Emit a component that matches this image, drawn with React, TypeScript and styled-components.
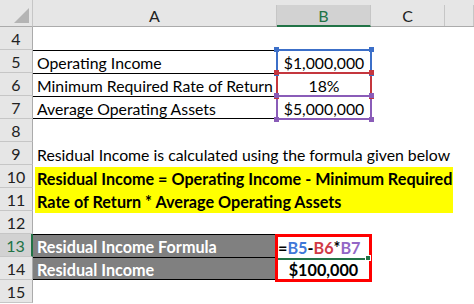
import styled, { createGlobalStyle } from "styled-components"

const GlobalStyle = createGlobalStyle`
    html, body {
        margin: 0;
        padding: 0;
        background: #ffffff;
    }
    body {
        font-family: Lato, "Liberation Sans", sans-serif;
        color: #000000;
    }
`

const Sheet = styled.div`
    display: grid;
    grid-template-columns: 33px 244px 94px 74px 29px;
    grid-template-rows: 27px repeat(12, 23px);
    width: 474px;
    height: 304px;
    overflow: hidden;
    position: relative;
    background: #ffffff;
`

const Corner = styled.div`
    grid-row: 1;
    grid-column: 1;
    background: #e6e6e6;
    border-bottom: 1px solid #ababab;
    border-right: 1px solid #c6c6c6;
    box-sizing: border-box;
    display: flex;
    align-items: flex-end;
    justify-content: flex-end;
    padding: 0 2px 2px 0;
`

const ColHead = styled.div<{ $col: number }>`
    grid-row: 1;
    grid-column: ${(p) => p.$col};
    background: #e6e6e6;
    border-bottom: 1px solid #ababab;
    box-sizing: border-box;
    padding-top: 5px;
    display: flex;
`

const ColLabel = styled.div<{ $active?: boolean }>`
    flex: 1;
    display: flex;
    align-items: center;
    justify-content: center;
    font-size: 16px;
    color: ${(p) => (p.$active ? "#217346" : "#222222")};
    background: ${(p) => (p.$active ? "#d2d2d2" : "transparent")};
    border-right: 1px solid #c6c6c6;
    border-bottom: ${(p) => (p.$active ? "2px solid #217346" : "0")};
    margin-bottom: ${(p) => (p.$active ? "-1px" : "0")};
`

const RowHead = styled.div<{ $row: number; $active?: boolean }>`
    grid-row: ${(p) => p.$row};
    grid-column: 1;
    background: ${(p) => (p.$active ? "#d2d2d2" : "#e6e6e6")};
    color: ${(p) => (p.$active ? "#217346" : "#222222")};
    border-bottom: 1px solid #c6c6c6;
    border-right: ${(p) => (p.$active ? "2px solid #217346" : "1px solid #ababab")};
    box-sizing: border-box;
    display: flex;
    align-items: center;
    justify-content: center;
    font-size: 16px;
`

const Cell = styled.div<{ $row: number; $col: number; $span?: number; $top?: boolean; $bottom?: boolean }>`
    grid-row: ${(p) => p.$row};
    grid-column: ${(p) => p.$col} / span ${(p) => p.$span ?? 1};
    box-sizing: border-box;
    border-top: ${(p) => (p.$top ? "1px solid #000000" : "0")};
    border-bottom: ${(p) => (p.$bottom ? "1px solid #000000" : "0")};
    display: flex;
    align-items: center;
    padding: 1px 4px 0;
    font-size: 15.8px;
    white-space: nowrap;
    position: relative;
`

const ValueCell = styled(Cell)`
    justify-content: center;
    padding: 1px 0 0;
`

const Handle = styled.span<{ $color: string; $x: "left" | "right"; $y: "top" | "bottom" }>`
    position: absolute;
    width: 5px;
    height: 5px;
    background: ${(p) => p.$color};
    ${(p) => p.$x}: -3px;
    ${(p) => p.$y}: -3px;
    z-index: 3;
`

const RangeFrame = styled.span<{ $color: string }>`
    position: absolute;
    inset: -1px;
    border: 2px solid ${(p) => p.$color};
    pointer-events: none;
    z-index: 2;
`

const Highlight = styled.div`
    grid-row: 8 / span 2;
    grid-column: 2 / span 4;
    margin: 2px 0 -2px 2px;
    width: 418px;
    background: #ffff00;
    font-size: 16.2px;
    font-weight: 700;
    display: flex;
    flex-direction: column;
    justify-content: space-around;
    padding: 0 0 0 2px;
    box-sizing: border-box;
`

const GrayCell = styled(Cell)`
    background: #808080;
    color: #ffffff;
    font-weight: 700;
    font-size: 16.2px;
    border-top: 1px solid #000000;
`

const ResultBox = styled.div`
    grid-row: 11 / span 2;
    grid-column: 3;
    margin: 0 -1px -2px -2px;
    border: 3px solid #ff0000;
    display: flex;
    flex-direction: column;
    z-index: 2;
    box-sizing: border-box;
    background: #ffffff;
`

const FormulaCell = styled.div`
    flex: 1;
    font-size: 16.2px;
    font-weight: 700;
    display: flex;
    align-items: center;
    padding-top: 1px;
    border-bottom: 2px solid #217346;
    position: relative;
`

const FillHandle = styled.span`
    position: absolute;
    right: -2px;
    bottom: -3px;
    width: 4px;
    height: 4px;
    background: #217346;
    border: 1px solid #ffffff;
`

const ResultCell = styled.div`
    flex: 1;
    font-size: 16.2px;
    font-weight: 700;
    display: flex;
    align-items: center;
    justify-content: center;
`

const Ref = styled.span<{ $color: string }>`
    color: ${(p) => p.$color};
`

const Line = styled.span``

const BLUE = "#3c6fc8"
const RED = "#c4363e"
const PURPLE = "#8a5cb8"

const inputs = [
    { row: 5, label: "Operating Income", value: "$1,000,000", color: BLUE, ink: "#3f78d8" },
    { row: 6, label: "Minimum Required Rate of Return", value: "18%", color: RED, ink: "#d03a46" },
    { row: 7, label: "Average Operating Assets", value: "$5,000,000", color: PURPLE, ink: "#9266c6" },
]

export default function App() {
    const rows = [4, 5, 6, 7, 8, 9, 10, 11, 12, 13, 14, 15]

    return (
        <>
            <GlobalStyle />
            <Sheet>
                <Corner>
                    <svg width="16" height="16" viewBox="0 0 16 16">
                        <polygon points="0,15 15,15 15,0" fill="#b4b4b4" />
                    </svg>
                </Corner>
                <ColHead $col={2}><ColLabel>A</ColLabel></ColHead>
                <ColHead $col={3}><ColLabel $active>B</ColLabel></ColHead>
                <ColHead $col={4}><ColLabel>C</ColLabel></ColHead>
                <ColHead $col={5}><ColLabel /></ColHead>

                {rows.map((r) => (
                    <RowHead key={r} $row={r - 2} $active={r === 13}>{r}</RowHead>
                ))}

                {inputs.map((item, i) => (
                    <Cell key={item.row} $row={item.row - 2} $col={2} $top $bottom={i === inputs.length - 1}>
                        {item.label}
                    </Cell>
                ))}

                {inputs.map((item) => (
                    <ValueCell key={item.row} $row={item.row - 2} $col={3}>
                        {item.value}
                        <RangeFrame $color={item.color} />
                        <Handle $color={item.color} $x="left" $y="top" />
                        <Handle $color={item.color} $x="right" $y="top" />
                        <Handle $color={item.color} $x="left" $y="bottom" />
                        <Handle $color={item.color} $x="right" $y="bottom" />
                    </ValueCell>
                ))}

                <Cell $row={7} $col={2} $span={4}>
                    Residual Income is calculated using the formula given below
                </Cell>

                <Highlight>
                    <Line>Residual Income = Operating Income - Minimum Required</Line>
                    <Line>Rate of Return * Average Operating Assets</Line>
                </Highlight>

                <GrayCell $row={11} $col={2}>Residual Income Formula</GrayCell>
                <GrayCell $row={12} $col={2} $bottom>Residual Income</GrayCell>

                <ResultBox>
                    <FormulaCell>
                        =<Ref $color={inputs[0].ink}>B5</Ref>-<Ref $color={inputs[1].ink}>B6</Ref>*<Ref $color={inputs[2].ink}>B7</Ref>
                        <FillHandle />
                    </FormulaCell>
                    <ResultCell>$100,000</ResultCell>
                </ResultBox>
            </Sheet>
        </>
    )
}
